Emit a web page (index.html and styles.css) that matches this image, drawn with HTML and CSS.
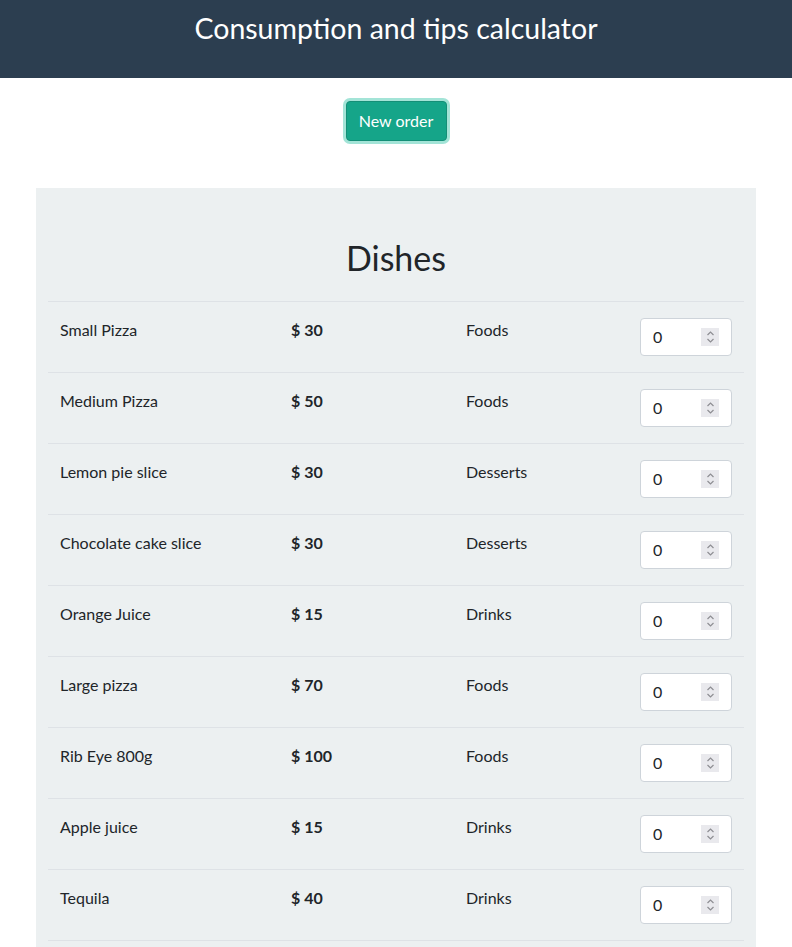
FILE: index.html
```html
<!DOCTYPE html>
<html>
<head>
<meta charset="utf-8">
<link rel="stylesheet" href="styles.css">
</head>
<body>
<header class="topbar">
  <h1 class="title">Consumption and tips calculator</h1>
</header>
<div class="actions">
  <button class="btn-new" type="button">New order</button>
</div>
<section class="panel">
  <h2 class="panel-title">Dishes</h2>
  <table class="dishes">
    <tbody>
      <tr><td class="c-name">Small Pizza</td><td class="c-price">$ 30</td><td class="c-cat">Foods</td><td class="c-qty"><div class="qty"><input type="number" value="0"><span class="spin"><svg width="9" height="14" viewBox="0 0 9 14"><path d="M1.5 5 4.5 2 7.5 5M1.5 9 4.5 12 7.5 9" fill="none" stroke="#8e8e93" stroke-width="1.2"/></svg></span></div></td></tr>
      <tr><td class="c-name">Medium Pizza</td><td class="c-price">$ 50</td><td class="c-cat">Foods</td><td class="c-qty"><div class="qty"><input type="number" value="0"><span class="spin"><svg width="9" height="14" viewBox="0 0 9 14"><path d="M1.5 5 4.5 2 7.5 5M1.5 9 4.5 12 7.5 9" fill="none" stroke="#8e8e93" stroke-width="1.2"/></svg></span></div></td></tr>
      <tr><td class="c-name">Lemon pie slice</td><td class="c-price">$ 30</td><td class="c-cat">Desserts</td><td class="c-qty"><div class="qty"><input type="number" value="0"><span class="spin"><svg width="9" height="14" viewBox="0 0 9 14"><path d="M1.5 5 4.5 2 7.5 5M1.5 9 4.5 12 7.5 9" fill="none" stroke="#8e8e93" stroke-width="1.2"/></svg></span></div></td></tr>
      <tr><td class="c-name">Chocolate cake slice</td><td class="c-price">$ 30</td><td class="c-cat">Desserts</td><td class="c-qty"><div class="qty"><input type="number" value="0"><span class="spin"><svg width="9" height="14" viewBox="0 0 9 14"><path d="M1.5 5 4.5 2 7.5 5M1.5 9 4.5 12 7.5 9" fill="none" stroke="#8e8e93" stroke-width="1.2"/></svg></span></div></td></tr>
      <tr><td class="c-name">Orange Juice</td><td class="c-price">$ 15</td><td class="c-cat">Drinks</td><td class="c-qty"><div class="qty"><input type="number" value="0"><span class="spin"><svg width="9" height="14" viewBox="0 0 9 14"><path d="M1.5 5 4.5 2 7.5 5M1.5 9 4.5 12 7.5 9" fill="none" stroke="#8e8e93" stroke-width="1.2"/></svg></span></div></td></tr>
      <tr><td class="c-name">Large pizza</td><td class="c-price">$ 70</td><td class="c-cat">Foods</td><td class="c-qty"><div class="qty"><input type="number" value="0"><span class="spin"><svg width="9" height="14" viewBox="0 0 9 14"><path d="M1.5 5 4.5 2 7.5 5M1.5 9 4.5 12 7.5 9" fill="none" stroke="#8e8e93" stroke-width="1.2"/></svg></span></div></td></tr>
      <tr><td class="c-name">Rib Eye 800g</td><td class="c-price">$ 100</td><td class="c-cat">Foods</td><td class="c-qty"><div class="qty"><input type="number" value="0"><span class="spin"><svg width="9" height="14" viewBox="0 0 9 14"><path d="M1.5 5 4.5 2 7.5 5M1.5 9 4.5 12 7.5 9" fill="none" stroke="#8e8e93" stroke-width="1.2"/></svg></span></div></td></tr>
      <tr><td class="c-name">Apple juice</td><td class="c-price">$ 15</td><td class="c-cat">Drinks</td><td class="c-qty"><div class="qty"><input type="number" value="0"><span class="spin"><svg width="9" height="14" viewBox="0 0 9 14"><path d="M1.5 5 4.5 2 7.5 5M1.5 9 4.5 12 7.5 9" fill="none" stroke="#8e8e93" stroke-width="1.2"/></svg></span></div></td></tr>
      <tr><td class="c-name">Tequila</td><td class="c-price">$ 40</td><td class="c-cat">Drinks</td><td class="c-qty"><div class="qty"><input type="number" value="0"><span class="spin"><svg width="9" height="14" viewBox="0 0 9 14"><path d="M1.5 5 4.5 2 7.5 5M1.5 9 4.5 12 7.5 9" fill="none" stroke="#8e8e93" stroke-width="1.2"/></svg></span></div></td></tr>
    </tbody>
  </table>
</section>
</body>
</html>
```
FILE: styles.css
```css
* { box-sizing: border-box; }
html, body { margin: 0; padding: 0; }
body {
  font-family: Lato, "Open Sans", sans-serif;
  font-size: 16px;
  line-height: 1.5;
  color: #212529;
  background: #fff;
}
.topbar {
  background: #2c3e50;
  height: 78px;
  display: flex;
  justify-content: center;
  padding-top: 8px;
}
.title {
  margin: 0;
  color: #fff;
  font-weight: 400;
  font-size: 28.5px;
  line-height: 40px;
}
.actions {
  display: flex;
  justify-content: center;
  padding-top: 23px;
  height: 110px;
}
.btn-new {
  font-family: Lato, sans-serif;
  font-size: 16px;
  line-height: 24px;
  color: #fff;
  background: #15a589;
  border: 1px solid #148f77;
  border-radius: 4px;
  padding: 7px 0;
  height: 40px;
  width: 101px;
  box-shadow: 0 0 0 3px #a3e4d7;
}
.panel {
  margin: 0 36px;
  background: #ecf0f1;
  padding: 36px 12px 20px;
}
.panel-title {
  margin: 0;
  text-align: center;
  font-weight: 400;
  font-size: 34px;
  line-height: 40px;
  height: 77px;
  padding-top: 14px;
}
.dishes {
  width: 100%;
  border-collapse: collapse;
}
.dishes td {
  border-top: 1px solid #dee2e6;
  border-bottom: 1px solid #dee2e6;
  padding: 16px 12px;
  vertical-align: top;
  height: 71px;
  line-height: 24px;
}
.c-name { width: 231px; }
.c-price { width: 175px; font-weight: 700; }
.c-cat { width: 174px; }
.c-qty { width: 116px; }
.qty {
  width: 92px;
  height: 38px;
  border: 1px solid #ced4da;
  border-radius: 4px;
  background: #fff;
  padding: 0 12px;
  display: flex;
  align-items: center;
}
.qty input {
  flex: 1;
  min-width: 0;
  border: 0;
  padding: 0;
  margin: 0 0 1px;
  background: transparent;
  font-family: Lato, sans-serif;
  font-size: 16px;
  color: #212529;
  outline: none;
  -moz-appearance: textfield;
}
.qty input::-webkit-inner-spin-button,
.qty input::-webkit-outer-spin-button {
  -webkit-appearance: none;
  margin: 0;
}
.spin {
  width: 18px;
  height: 18px;
  margin-bottom: 1px;
  background: #e9e9ed;
  display: flex;
  align-items: center;
  justify-content: center;
}
```
